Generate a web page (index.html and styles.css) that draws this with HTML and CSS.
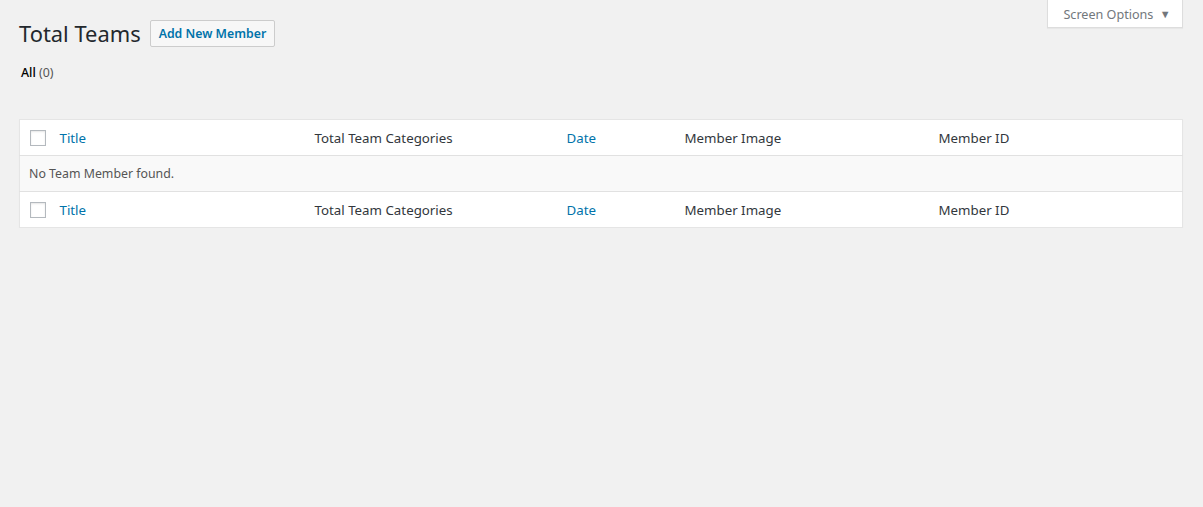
FILE: index.html
```html
<!DOCTYPE html>
<html>
<head>
<meta charset="utf-8">
<link rel="stylesheet" href="styles.css">
</head>
<body>
<div class="screen-meta">
  <button class="screen-options">Screen Options <span class="arrow">▼</span></button>
</div>
<div class="wrap">
  <div class="title-row">
    <h1 class="page-title">Total Teams</h1>
    <a class="add-new">Add New Member</a>
  </div>
  <ul class="subsubsub">
    <li><span class="current">All</span> <span class="count">(0)</span></li>
  </ul>
  <table class="list-table">
    <thead>
      <tr>
        <td class="col-cb"><span class="cb"></span></td>
        <th class="col-title link">Title</th>
        <th class="col-cat">Total Team Categories</th>
        <th class="col-date link">Date</th>
        <th class="col-img">Member Image</th>
        <th class="col-id">Member ID</th>
      </tr>
    </thead>
    <tbody>
      <tr class="no-items">
        <td colspan="6">No Team Member found.</td>
      </tr>
    </tbody>
    <tfoot>
      <tr>
        <td class="col-cb"><span class="cb"></span></td>
        <th class="col-title link">Title</th>
        <th class="col-cat">Total Team Categories</th>
        <th class="col-date link">Date</th>
        <th class="col-img">Member Image</th>
        <th class="col-id">Member ID</th>
      </tr>
    </tfoot>
  </table>
</div>
</body>
</html>
```
FILE: styles.css
```css
html, body {
  margin: 0;
  padding: 0;
  background: #f1f1f1;
  font-family: "Noto Sans", "Open Sans", sans-serif;
  font-size: 12.35px;
  color: #444;
}
.screen-meta {
  float: right;
  margin-right: 20px;
}
.screen-options {
  display: block;
  width: 136px;
  height: 28px;
  background: #fff;
  border: 1px solid #ddd;
  border-top: none;
  box-shadow: 0 1px 1px rgba(0,0,0,.04);
  color: #72777c;
  font-family: inherit;
  font-size: 12.6px;
  padding: 1px 0 0 4px;
  text-align: center;
  cursor: pointer;
}
.screen-options .arrow {
  font-size: 11px;
  margin-left: 3px;
  position: relative;
  top: -1px;
}
.wrap {
  padding: 0 20px 0 19px;
}
.title-row {
  display: flex;
  align-items: center;
  gap: 9px;
  padding-top: 20px;
}
.page-title {
  margin: 0;
  font-size: 21.9px;
  font-weight: 400;
  color: #23282d;
  line-height: 27px;
}
.add-new {
  display: inline-block;
  height: 25px;
  line-height: 25px;
  padding: 0 8px;
  border: 1px solid #ccc;
  border-radius: 2px;
  background: #f7f7f7;
  color: #0073aa;
  font-weight: 600;
  font-size: 12.3px;
}
.subsubsub {
  list-style: none;
  margin: 16px 0 0 2px;
  padding: 0;
  height: 20px;
  line-height: 20px;
}
.subsubsub .current {
  color: #000;
  font-weight: 500;
}
.subsubsub .count {
  color: #555;
}
.list-table {
  margin-top: 36px;
  width: 100%;
  border-collapse: collapse;
  table-layout: fixed;
  background: #fff;
  border: 1px solid #e5e5e5;
  box-shadow: 0 1px 1px rgba(0,0,0,.04);
}
.list-table th, .list-table td {
  text-align: left;
  font-weight: 400;
  color: #32373c;
  padding: 0 10px;
  height: 35px;
  font-size: 13.3px;
}
.list-table thead tr {
  border-bottom: 1px solid #e1e1e1;
}
.list-table tfoot tr {
  border-top: 1px solid #e1e1e1;
}
.list-table .link {
  color: #0073aa;
}
.list-table .no-items td {
  background: #f9f9f9;
  color: #555;
  padding-left: 9px;
  font-size: 12.35px;
}
.col-cb { width: 30px; padding: 0 0 0 10px !important; box-sizing: border-box; }
.col-title { width: 235px; }
.col-cat { width: 232px; }
.col-date { width: 98px; }
.col-img { width: 234px; }
.cb {
  display: block;
  width: 14px;
  height: 14px;
  border: 1px solid #b4b9be;
  background: #fff;
  box-shadow: inset 0 1px 2px rgba(0,0,0,.1);
}
```
